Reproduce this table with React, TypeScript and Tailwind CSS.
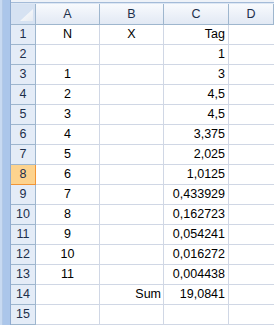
import React from "react";

const rows: [string, string, string][] = [
  ["N", "X", "Tag"],
  ["", "", "1"],
  ["1", "", "3"],
  ["2", "", "4,5"],
  ["3", "", "4,5"],
  ["4", "", "3,375"],
  ["5", "", "2,025"],
  ["6", "", "1,0125"],
  ["7", "", "0,433929"],
  ["8", "", "0,162723"],
  ["9", "", "0,054241"],
  ["10", "", "0,016272"],
  ["11", "", "0,004438"],
  ["", "Sum", "19,0841"],
  ["", "", ""],
];

export default function App() {
  return (
    <div
      className="flex w-[274px] h-[325px] overflow-hidden bg-white text-black"
      style={{ fontFamily: '"Liberation Sans", Arial, sans-serif' }}
    >
      {/* left frame strip */}
      <div className="flex h-full w-[11px] shrink-0">
        <div className="w-[2px] bg-[#c8daf1]" />
        <div className="w-[1px] bg-[#b3c9e6]" />
        <div className="w-[7px] bg-[#abc6ea]" />
        <div className="w-[1px] bg-[#8fabd0]" />
      </div>
      <div className="flex flex-col flex-1 min-w-0">
        {/* top strip */}
        <div className="h-[3px] bg-[#eef2f8]" />
        <div className="h-[1px] bg-[#a4bbd8]" />
        <div className="h-[1px] bg-[#dde7f4]" />
        <div className="grid grid-cols-[25px_64px_64px_65px_1fr] grid-rows-[21px_repeat(15,20px)] text-[12.5px] leading-[19px]">
          {/* corner */}
          <div className="relative border-r border-b border-[#9eb6ce] bg-[#d6e2f2]">
            <svg className="absolute left-0 top-0" width="24" height="20" viewBox="0 0 24 20">
              <defs>
                <linearGradient id="tri" x1="0" y1="0" x2="1" y2="1">
                  <stop offset="0" stopColor="#ffffff" />
                  <stop offset="1" stopColor="#e6ebf2" />
                </linearGradient>
              </defs>
              <polygon points="9,17 22,17 22,5" fill="url(#tri)" />
            </svg>
          </div>
          {["A", "B", "C", "D"].map((c) => (
            <div
              key={c}
              className="border-r border-b border-[#9eb6ce] bg-gradient-to-b from-[#f8fafd] to-[#e2e9f4] text-center text-[#1d2f4b] leading-[20px]"
            >
              {c}
            </div>
          ))}
          {rows.map((r, i) => {
            const sel = i === 7;
            return (
              <React.Fragment key={i}>
                <div
                  className={
                    sel
                      ? "border-r border-b border-[#f29536] bg-[#fdd38e] text-center text-[#1d2f4b]"
                      : "border-r border-b border-[#9eb6ce] bg-[#e4ecf7] text-center text-[#1d2f4b]"
                  }
                >
                  {i + 1}
                </div>
                <div className="border-r border-b border-[#d0d7e5] text-center">{r[0]}</div>
                <div
                  className={
                    r[1] === "X"
                      ? "border-r border-b border-[#d0d7e5] text-center"
                      : "border-r border-b border-[#d0d7e5] text-right pr-[2px]"
                  }
                >
                  {r[1]}
                </div>
                <div className="border-r border-b border-[#d0d7e5] text-right pr-[3px]">{r[2]}</div>
                <div className="border-b border-[#d0d7e5]" />
              </React.Fragment>
            );
          })}
        </div>
      </div>
    </div>
  );
}
